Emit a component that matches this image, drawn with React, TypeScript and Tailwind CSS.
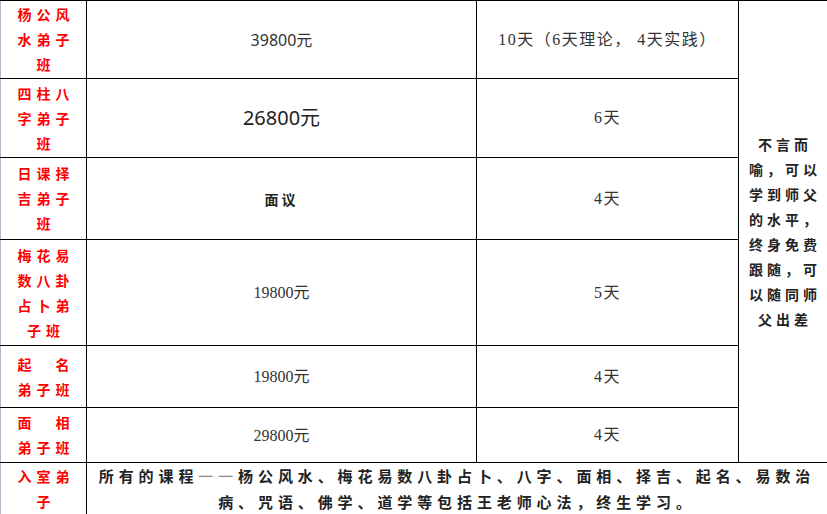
const cjk = "font-['Noto_Sans_CJK_SC',sans-serif]";
const serifNum = "font-['Liberation_Serif','Noto_Sans_CJK_SC',serif]";
const sansNum = "font-['Noto_Sans','Noto_Sans_CJK_SC',sans-serif]";

const rows = [
  { label: ["杨公风", "水弟子", "班"], price: "39800元", priceCls: `${sansNum} text-[16px] text-[#333]`, days: "10天（6天理论， 4天实践）", h: "h-[78px]" },
  { label: ["四柱八", "字弟子", "班"], price: "26800元", priceCls: `${sansNum} text-[20px] text-[#222]`, days: "6天", h: "h-[79px]" },
  { label: ["日课择", "吉弟子", "班"], price: "面议", priceCls: `${cjk} text-[14px] font-semibold text-[#222] tracking-[3px]`, days: "4天", h: "h-[82px]" },
  { label: ["梅花易", "数八卦", "占卜弟", "子班"], price: "19800元", priceCls: `${serifNum} text-[16px] text-[#333]`, days: "5天", h: "h-[106px]" },
  { label: ["起　名", "弟子班"], price: "19800元", priceCls: `${serifNum} text-[16px] text-[#333]`, days: "4天", h: "h-[62px]" },
  { label: ["面　相", "弟子班"], price: "29800元", priceCls: `${serifNum} text-[16px] text-[#333]`, days: "4天", h: "h-[55px]" },
];

const note = ["不言而", "喻，可以", "学到师父", "的水平，", "终身免费", "跟随，可", "以随同师", "父出差"];

function Label({ lines }: { lines: string[] }) {
  return (
    <div className={`${cjk} text-[14px] font-bold text-[#ff0000] leading-[25px] tracking-[5px] text-center pl-[5px]`}>
      {lines.map((l, i) => (
        <div key={i}>{l}</div>
      ))}
    </div>
  );
}

export default function App() {
  return (
    <div className="w-[827px] h-[514px] bg-white overflow-hidden">
      <table className="table-fixed border-collapse w-[827px] border-t border-t-black border-l border-l-[#b0b9ca]">
        <colgroup>
          <col className="w-[86px]" />
          <col className="w-[390px]" />
          <col className="w-[262px]" />
          <col className="w-[89px]" />
        </colgroup>
        <tbody>
          {rows.map((r, i) => (
            <tr key={i} className={r.h}>
              <td className="p-0 border border-black border-l-[#b0b9ca] align-middle">
                <Label lines={r.label} />
              </td>
              <td className="p-0 border border-black text-center align-middle">
                <span className={r.priceCls}>{r.price}</span>
              </td>
              <td className={`p-0 border border-black text-center align-middle ${serifNum} text-[16px] text-[#333] tracking-[1.5px] whitespace-pre`}>
                {r.days}
              </td>
              {i === 0 && (
                <td rowSpan={6} className="p-0 border border-black align-middle">
                  <div className={`${cjk} text-[14px] font-semibold text-[#222] leading-[25px] tracking-[4px] text-center pl-[4px]`}>
                    {note.map((l, j) => (
                      <div key={j}>{l}</div>
                    ))}
                  </div>
                </td>
              )}
            </tr>
          ))}
          <tr className="h-[51px]">
            <td className="p-0 border border-black border-l-[#b0b9ca] align-middle">
              <Label lines={["入室弟", "子"]} />
            </td>
            <td colSpan={3} className="p-0 border border-black align-middle">
              <div className={`${cjk} text-[15px] font-semibold text-[#222] leading-[26px] tracking-[4.9px] text-center`}>
                <div>所有的课程<span className="text-[#888] font-normal">一一</span>杨公风水、梅花易数八卦占卜、八字、面相、择吉、起名、易数治</div>
                <div>病、咒语、佛学、道学等包括王老师心法，终生学习。</div>
              </div>
            </td>
          </tr>
        </tbody>
      </table>
    </div>
  );
}
